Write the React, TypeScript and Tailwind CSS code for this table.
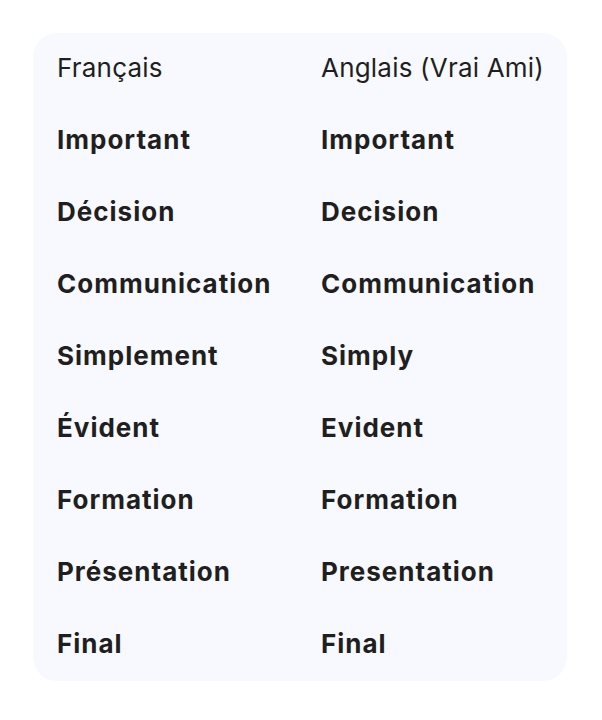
import React from "react";

const rows: [string, string][] = [
  ["Important", "Important"],
  ["Décision", "Decision"],
  ["Communication", "Communication"],
  ["Simplement", "Simply"],
  ["Évident", "Evident"],
  ["Formation", "Formation"],
  ["Présentation", "Presentation"],
  ["Final", "Final"],
];

export default function App() {
  return (
    <div className="min-h-screen bg-white p-[33px] pr-[35px]" style={{ fontFamily: "Inter, 'Open Sans', sans-serif" }}>
      <div className="rounded-[24px] bg-[#f8f9fe] pl-[24px] text-[#1f1f1f]">
        <div className="grid grid-cols-[264px_1fr]">
          <div className="flex h-[72px] items-center pb-[4px] text-[26px] font-normal tracking-[0.2px]">Français</div>
          <div className="flex h-[72px] items-center pb-[4px] text-[26px] font-normal tracking-[0.2px]">Anglais (Vrai Ami)</div>
          {rows.map(([fr, en]) => (
            <React.Fragment key={fr}>
              <div className="flex h-[72px] items-center pb-[3px] text-[26px] font-bold tracking-[1px]">{fr}</div>
              <div className="flex h-[72px] items-center pb-[3px] text-[26px] font-bold tracking-[1px]">{en}</div>
            </React.Fragment>
          ))}
        </div>
      </div>
    </div>
  );
}
